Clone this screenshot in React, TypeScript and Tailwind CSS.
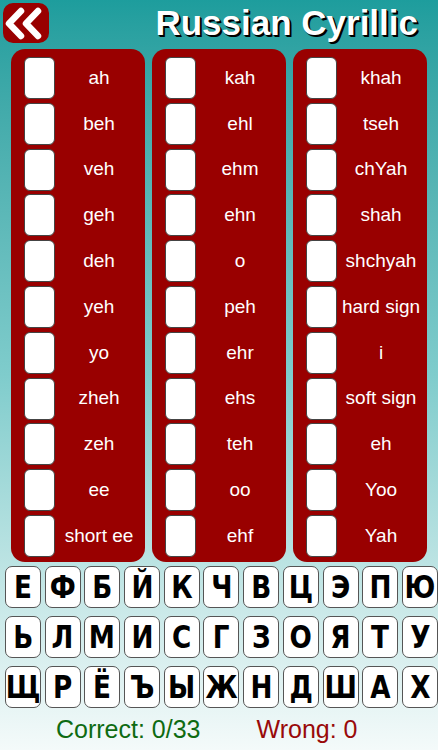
import React from "react";

const columns: string[][] = [
  ["ah", "beh", "veh", "geh", "deh", "yeh", "yo", "zheh", "zeh", "ee", "short ee"],
  ["kah", "ehl", "ehm", "ehn", "o", "peh", "ehr", "ehs", "teh", "oo", "ehf"],
  ["khah", "tseh", "chYah", "shah", "shchyah", "hard sign", "i", "soft sign", "eh", "Yoo", "Yah"],
];

const letters: string[][] = [
  ["Е", "Ф", "Б", "Й", "К", "Ч", "В", "Ц", "Э", "П", "Ю"],
  ["Ь", "Л", "М", "И", "С", "Г", "З", "О", "Я", "Т", "У"],
  ["Щ", "Р", "Ё", "Ъ", "Ы", "Ж", "Н", "Д", "Ш", "А", "Х"],
];

function BackButton() {
  return (
    <button className="mt-[3px] ml-[3px] flex h-[40px] w-[46px] items-center justify-center rounded-[10px] bg-[#990000]">
      <svg width="46" height="40" viewBox="0 0 46 40">
        <polyline
          points="18,8 6,20.5 18,33"
          fill="none"
          stroke="#fff"
          strokeWidth="6.5"
          strokeLinecap="round"
          strokeLinejoin="round"
        />
        <polyline
          points="35,8 23,20.5 35,33"
          fill="none"
          stroke="#fff"
          strokeWidth="6.5"
          strokeLinecap="round"
          strokeLinejoin="round"
        />
      </svg>
    </button>
  );
}

function SoundPanel({ items }: { items: string[] }) {
  return (
    <div className="flex h-[513px] w-[134px] flex-col gap-[3.8px] rounded-[14px] bg-[#990000] pt-[8px] pl-[13px]">
      {items.map((label) => (
        <div key={label} className="flex h-[42px] items-center">
          <div className="h-[42px] w-[31px] rounded-[6px] border border-[#444] bg-white" />
          <span className="flex-1 pr-[2px] text-center text-[19px] text-white">{label}</span>
        </div>
      ))}
    </div>
  );
}

export default function App() {
  return (
    <div
      className="flex h-[750px] w-[438px] flex-col overflow-hidden bg-gradient-to-b from-[#1d9d9d] via-[#7fcccc] to-[#f4fafa]"
      style={{ fontFamily: '"Liberation Sans", Arial, sans-serif' }}
    >
      {/* Cabecera */}
      <div className="flex h-[49px] items-start">
        <BackButton />
        <h1 className="mt-[3px] mr-[20px] ml-auto text-[35px] leading-[40px] font-bold text-white [text-shadow:2px_2px_0_#000,1px_1px_1px_#000]">
          Russian Cyrillic
        </h1>
      </div>

      {/* Paneles de sonidos */}
      <div className="flex gap-[7px] pl-[11px]">
        {columns.map((col, i) => (
          <SoundPanel key={i} items={col} />
        ))}
      </div>

      {/* Teclado de letras */}
      <div className="mt-[4px] flex flex-col gap-[8px] pl-[5px]">
        {letters.map((row, r) => (
          <div key={r} className="flex gap-[3.7px]">
            {row.map((ch) => (
              <div
                key={ch}
                className="flex h-[42px] w-[36px] shrink-0 items-center justify-center overflow-visible rounded-[7px] border border-[#555] bg-white text-[32px] leading-none font-bold text-black"
                style={{ fontFamily: '"DejaVu Sans", sans-serif' }}
              >
                <span className="inline-block scale-x-[0.82]">{ch}</span>
              </div>
            ))}
          </div>
        ))}
      </div>

      {/* Marcador */}
      <div className="mt-[6px] flex gap-[56px] pl-[56px] text-[25px] leading-[30px]">
        <span className="text-[#0e6b12]">Correct: 0/33</span>
        <span className="text-[#990a0a]">Wrong: 0</span>
      </div>
    </div>
  );
}
